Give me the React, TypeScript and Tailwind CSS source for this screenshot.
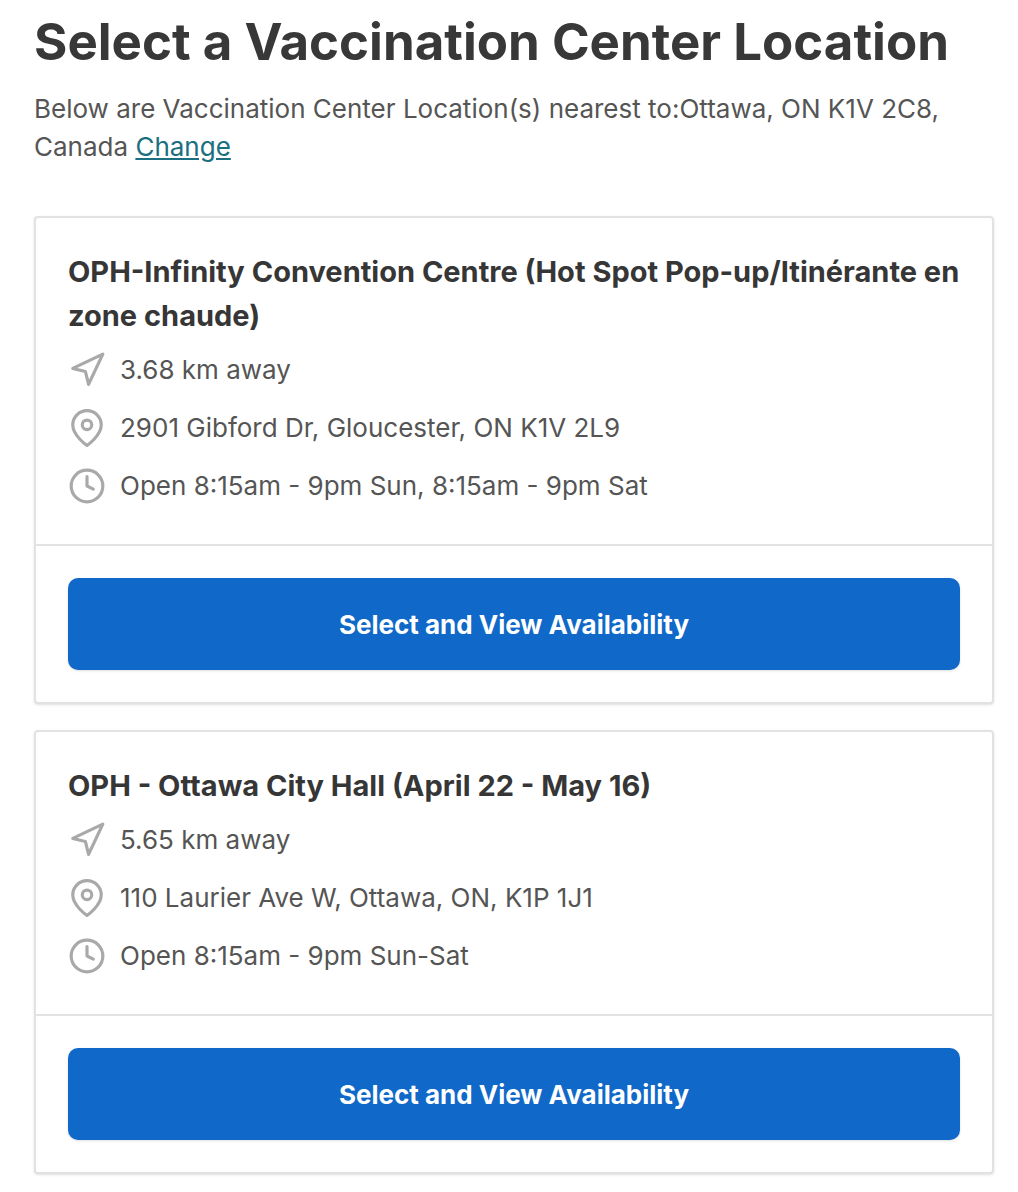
import { FiClock, FiMapPin, FiNavigation } from "react-icons/fi";

const locations = [
    {
        name: "OPH-Infinity Convention Centre (Hot Spot Pop-up/Itinérante en zone chaude)",
        distance: "3.68 km away",
        address: "2901 Gibford Dr, Gloucester, ON K1V 2L9",
        hours: "Open 8:15am - 9pm Sun, 8:15am - 9pm Sat",
    },
    {
        name: "OPH - Ottawa City Hall (April 22 - May 16)",
        distance: "5.65 km away",
        address: "110 Laurier Ave W, Ottawa, ON, K1P 1J1",
        hours: "Open 8:15am - 9pm Sun-Sat",
    },
];

type Location = (typeof locations)[number];

const LocationCard = ({ location }: { location: Location }) => {
    return (
        <section className="rounded border-2 border-[#e2e2e2] bg-white shadow-sm">
            <div className="px-8 pt-8 pb-[38px]">
                <h2 className="text-[29px] leading-[44px] font-bold text-[#363636]">{location.name}</h2>
                <ul className="mt-3 flex flex-col gap-[18px] text-[26px] leading-[40px] text-[#555555]">
                    <li className="flex items-center gap-[14px]">
                        <FiNavigation className="size-[38px] shrink-0 text-[#a9a9a9]" />
                        {location.distance}
                    </li>
                    <li className="flex items-center gap-[14px]">
                        <FiMapPin className="size-[38px] shrink-0 text-[#a9a9a9]" />
                        {location.address}
                    </li>
                    <li className="flex items-center gap-[14px]">
                        <FiClock className="size-[38px] shrink-0 text-[#a9a9a9]" />
                        {location.hours}
                    </li>
                </ul>
            </div>
            <div className="border-t-2 border-[#e2e2e2] p-8">
                <button
                    type="button"
                    className="h-[92px] w-full cursor-pointer rounded-[10px] bg-[#1068c9] text-[26px] font-bold text-white shadow-sm"
                >
                    Select and View Availability
                </button>
            </div>
        </section>
    );
};

export default function App() {
    return (
        <main className="min-h-screen bg-white pt-3 pr-6 pb-[18px] pl-[34px] font-[Inter,sans-serif]">
            <h1 className="text-[51px] leading-[60px] font-bold text-[#383838]">Select a Vaccination Center Location</h1>
            <p className="mt-[18px] text-[26px] leading-[38px] text-[#555555]">
                Below are Vaccination Center Location(s) nearest to:Ottawa, ON K1V 2C8, Canada{" "}
                <a href="#change" className="text-[#1b6f80] underline">
                    Change
                </a>
            </p>
            <div className="mt-[50px] flex flex-col gap-[26px]">
                {locations.map((location) => (
                    <LocationCard key={location.name} location={location} />
                ))}
            </div>
        </main>
    );
}
